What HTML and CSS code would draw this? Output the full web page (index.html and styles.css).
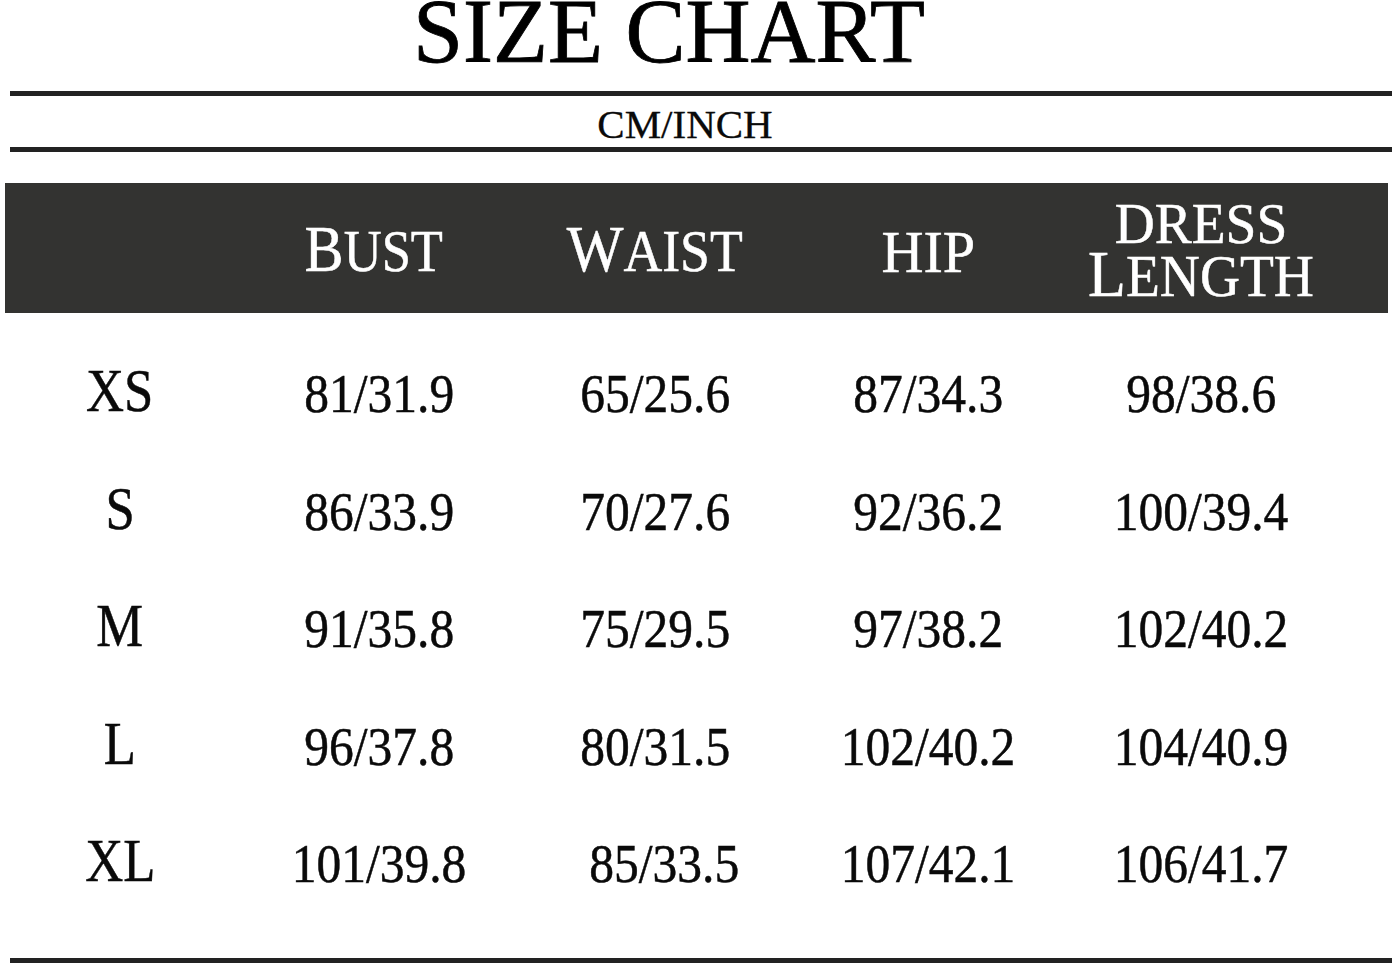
FILE: index.html
```html
<!DOCTYPE html>
<html lang="en">
<head>
<meta charset="utf-8">
<title>Size Chart</title>
<link rel="stylesheet" href="styles.css">
</head>
<body>
<main class="chart">
  <h1 class="title">SIZE CHART</h1>
  <hr class="rule rule-top">
  <p class="units">CM/INCH</p>
  <hr class="rule rule-mid">

  <div class="head">
    <div class="hcell"></div>
    <div class="hcell hcell-bust"><span class="lbl lbl-bust"><span class="cap">B</span>UST</span></div>
    <div class="hcell"><span class="lbl lbl-waist"><span class="cap">W</span>AIST</span></div>
    <div class="hcell hcell-hip"><span class="lbl lbl-hip">HIP</span></div>
    <div class="hcell">
      <span class="line line-dress">DRESS</span>
      <span class="line line-length"><span class="cap">L</span>ENGTH</span>
    </div>
  </div>

  <div class="rows">
    <div class="row">
      <div class="size"><span>XS</span></div>
      <div class="val"><span>81/31.9</span></div>
      <div class="val"><span>65/25.6</span></div>
      <div class="val"><span>87/34.3</span></div>
      <div class="val"><span>98/38.6</span></div>
    </div>
    <div class="row">
      <div class="size"><span>S</span></div>
      <div class="val"><span>86/33.9</span></div>
      <div class="val"><span>70/27.6</span></div>
      <div class="val"><span>92/36.2</span></div>
      <div class="val"><span>100/39.4</span></div>
    </div>
    <div class="row">
      <div class="size"><span>M</span></div>
      <div class="val"><span>91/35.8</span></div>
      <div class="val"><span>75/29.5</span></div>
      <div class="val"><span>97/38.2</span></div>
      <div class="val"><span>102/40.2</span></div>
    </div>
    <div class="row">
      <div class="size"><span>L</span></div>
      <div class="val"><span>96/37.8</span></div>
      <div class="val"><span>80/31.5</span></div>
      <div class="val"><span>102/40.2</span></div>
      <div class="val"><span>104/40.9</span></div>
    </div>
    <div class="row">
      <div class="size"><span>XL</span></div>
      <div class="val"><span>101/39.8</span></div>
      <div class="val val-nudge"><span>85/33.5</span></div>
      <div class="val"><span>107/42.1</span></div>
      <div class="val"><span>106/41.7</span></div>
    </div>
  </div>

  <hr class="rule rule-bottom">
</main>
</body>
</html>
```

FILE: styles.css
```css
html, body {
  margin: 0;
  padding: 0;
  background: #ffffff;
}

body {
  font-family: "Liberation Serif", "Times New Roman", serif;
  color: #0a0a0a;
}

.chart {
  width: 1400px;
}

.title {
  margin: 0;
  padding-right: 62px;
  font-size: 90px;
  font-weight: normal;
  line-height: 64px;
  text-align: center;
  color: #000;
  -webkit-text-stroke: 0.8px #000;
}

.rule {
  border: 0;
  height: 5px;
  margin: 0 8px 0 10px;
  background: #222222;
}

.rule-top {
  margin-top: 27px;
}

.units {
  margin: 8px 0 0;
  padding-right: 30px;
  font-size: 41px;
  line-height: 40px;
  text-align: center;
  -webkit-text-stroke: 0.3px #0a0a0a;
}

.rule-mid {
  margin-top: 3px;
}

.head {
  margin: 31px 12px 0 5px;
  height: 130px;
  box-sizing: border-box;
  padding-top: 4px;
  background: #333331;
  color: #ffffff;
  display: grid;
  grid-template-columns: 235px 278px 274px 272px 274px;
  align-items: center;
}

.hcell {
  text-align: center;
  font-size: 59px;
  line-height: 66px;
  -webkit-text-stroke: 0.5px #ffffff;
}

.hcell-bust {
  padding-right: 10px;
}

.hcell-hip {
  font-size: 60px;
  padding-top: 3px;
}

.cap {
  font-size: 66px;
}

.lbl {
  display: inline-block;
}

.lbl-bust {
  transform: scaleX(0.89);
}

.lbl-waist {
  transform: scaleX(0.91);
}

.lbl-hip {
  transform: scaleX(0.97);
}

.line {
  display: block;
  line-height: 50px;
}

.line-dress {
  font-size: 56px;
  transform: scaleX(0.99);
}

.line-length {
  transform: scaleX(0.94);
}

.rows {
  margin-top: 22px;
}

.row {
  display: grid;
  grid-template-columns: 240px 278px 274px 272px 274px;
  height: 117.5px;
}

.val {
  text-align: center;
  font-size: 55px;
  line-height: 117.5px;
  -webkit-text-stroke: 0.5px #0a0a0a;
}

.val span {
  display: inline-block;
  transform: scaleX(0.9);
}

.val-nudge {
  padding-left: 18px;
}

.size {
  text-align: center;
  font-size: 62px;
  line-height: 110px;
  -webkit-text-stroke: 0.5px #0a0a0a;
}

.size span {
  display: inline-block;
  transform: scaleX(0.85);
}

.rule-bottom {
  margin-top: 35px;
}
```
